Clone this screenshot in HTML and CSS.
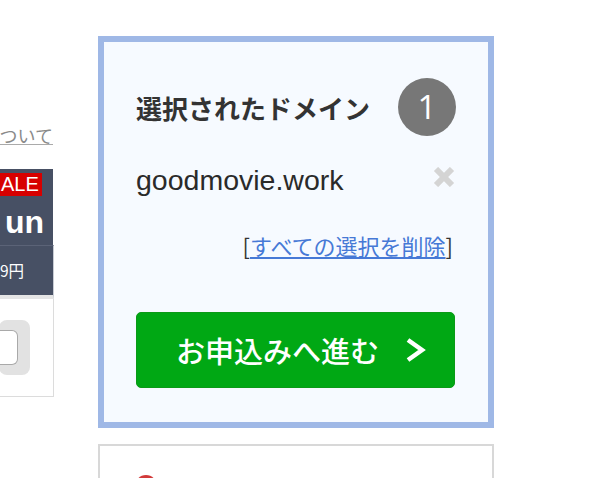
FILE: index.html
```html
<!DOCTYPE html>
<html lang="ja">
<head>
  <meta charset="UTF-8">
  <meta name="viewport" content="width=device-width, initial-scale=1.0">
  <title>選択されたドメイン</title>
  <link rel="stylesheet" href="styles.css">
</head>
<body>
  <div class="page">
    <aside class="side">
      <div class="side-row">
        <a class="side-link" href="#">ついて</a>
      </div>
      <div class="plan">
        <div class="plan-head">
          <span class="sale">ALE</span>
          <div class="side-row"><span class="plan-name">un</span></div>
        </div>
        <div class="plan-price">
          <div class="side-row">9円</div>
        </div>
        <div class="plan-body">
          <div class="side-row">
            <span class="check"><span class="check-box"></span></span>
          </div>
        </div>
      </div>
    </aside>

    <main class="main">
      <section class="cart">
        <div class="cart-head">
          <h2 class="cart-title">選択されたドメイン</h2>
          <span class="cart-count">1</span>
        </div>

        <div class="cart-item">
          <span class="cart-domain">goodmovie.work</span>
          <button class="remove" aria-label="削除">
            <svg width="22" height="20" viewBox="0 0 22 20">
              <path d="M3 2 L19 18 M19 2 L3 18" stroke="#d4d4d4" stroke-width="6" fill="none"/>
            </svg>
          </button>
        </div>

        <div class="clear">[<a href="#">すべての選択を削除</a>]</div>

        <button class="btn-apply">
          <span>お申込みへ進む</span>
          <svg width="24" height="24" viewBox="0 0 24 24">
            <polyline points="5,2 19,12 5,22" stroke="#fff" stroke-width="4.5" fill="none"/>
          </svg>
        </button>
      </section>

      <section class="next">
        <span class="next-icon"></span>
      </section>
    </main>
  </div>
</body>
</html>
```

FILE: styles.css
```css
body {
  margin: 0;
  background-color: #fff;
  font-family: "Noto Sans CJK JP", "Noto Sans", sans-serif;
  color: #333;
}

.page {
  display: flex;
  align-items: flex-start;
}

/* left column, cut off by the window edge */
.side {
  width: 54px;
  flex-shrink: 0;
  overflow: hidden;
  padding-top: 121px;
}

.side-row {
  display: flex;
  justify-content: flex-end;
  white-space: nowrap;
}

.side-link {
  font-size: 18px;
  line-height: 28px;
  color: #8a8a8a;
  text-decoration: underline;
  text-decoration-color: #aaa;
  margin-right: 1px;
}

.plan {
  margin-top: 20px;
}

.plan-head {
  background-color: #475064;
  height: 76px;
  padding-top: 4px;
  box-sizing: border-box;
  width: 53px;
}

.sale {
  display: block;
  width: 42px;
  background-color: #d70000;
  color: #fff;
  font-family: "Liberation Sans", sans-serif;
  font-size: 20px;
  line-height: 23px;
  padding-left: 1px;
  box-sizing: border-box;
}

.plan-name {
  color: #fff;
  font-family: "Liberation Sans", sans-serif;
  font-weight: bold;
  font-size: 32px;
  line-height: 40px;
  margin-top: 6px;
  margin-right: 9px;
}

.plan-price {
  background-color: #475064;
  border-right: 1px solid #c8ccd4;
  border-top: 1px solid #5b6377;
  height: 49px;
  color: #fff;
  font-size: 15.5px;
  line-height: 49px;
  border-bottom: 4px solid #e4e4e4;
}

.plan-price .side-row {
  margin-right: 29px;
}

.plan-body {
  height: 98px;
  border-right: 1px solid #dcdcdc;
  border-bottom: 1px solid #dcdcdc;
  padding-top: 21px;
  box-sizing: border-box;
}

.check {
  display: block;
  background-color: #e2e2e2;
  border-radius: 8px;
  padding: 10px 12px 10px 0;
  margin-right: 23px;
}

.check-box {
  display: block;
  width: 18px;
  height: 33px;
  background-color: #fff;
  border: 1px solid #a9a9a9;
  border-left: none;
  border-radius: 0 6px 6px 0;
}

/* right column */
.main {
  margin-left: 44px;
  width: 396px;
  flex-shrink: 0;
}

.cart {
  margin-top: 36px;
  border: 6px solid #9fb8e6;
  background-color: #f6faff;
  padding: 36px 33px 34px 32px;
}

.cart-head {
  display: flex;
  justify-content: space-between;
  align-items: center;
}

.cart-title {
  margin: 0;
  font-size: 26px;
  font-weight: bold;
  color: #333;
}

.cart-count {
  width: 58px;
  height: 58px;
  border-radius: 50%;
  background-color: #777;
  color: #fff;
  font-family: "Open Sans", sans-serif;
  font-size: 33px;
  line-height: 58px;
  text-align: center;
  margin-right: -1px;
}

.cart-item {
  display: flex;
  justify-content: space-between;
  align-items: center;
  margin-top: 28px;
}

.cart-domain {
  font-family: "Liberation Sans", sans-serif;
  font-size: 28.5px;
  line-height: 32px;
  color: #2a2a2a;
}

.remove {
  border: none;
  background: none;
  padding: 0;
  margin-top: -6px;
  display: flex;
  cursor: pointer;
}

.clear {
  margin-top: 32px;
  text-align: right;
  font-size: 22px;
  line-height: 34px;
  color: #333;
  margin-right: 2px;
}

.clear a {
  color: #4679d6;
}

.btn-apply {
  margin-top: 50px;
  width: 100%;
  height: 76px;
  display: flex;
  align-items: center;
  gap: 24px;
  padding: 0 0 0 39px;
  background-color: #00a814;
  border: 1px solid #0b9a17;
  border-radius: 5px;
  color: #fff;
  font-family: "Noto Sans CJK JP", sans-serif;
  font-size: 29px;
  font-weight: 500;
  cursor: pointer;
}

.next {
  margin-top: 16px;
  height: 60px;
  border: 2px solid #d8d8d8;
  padding: 29px 0 0 35px;
  box-sizing: border-box;
}

.next-icon {
  display: block;
  width: 22px;
  height: 22px;
  border-radius: 50%;
  background-color: #d23a3a;
}
```
